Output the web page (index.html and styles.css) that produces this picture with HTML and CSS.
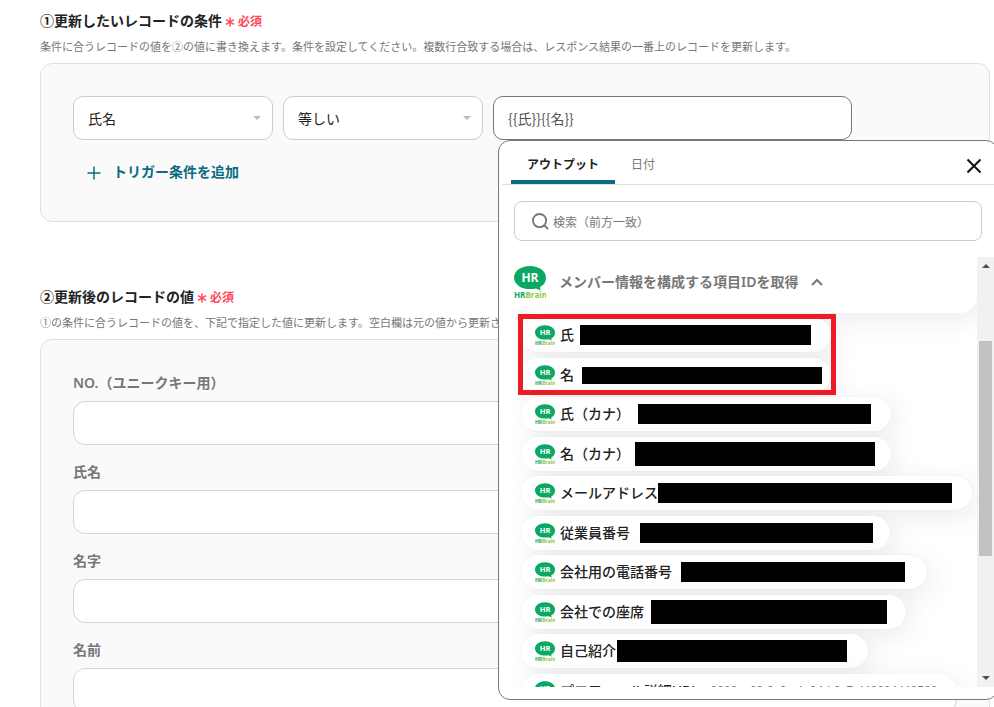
FILE: index.html
```html
<!DOCTYPE html>
<html lang="ja">
<head>
    <meta charset="UTF-8">
    <meta name="viewport" content="width=device-width, initial-scale=1.0">
    <title>レコードを更新する</title>
    <link rel="stylesheet" href="styles.css">
</head>
<body>

    <svg class="sprite" aria-hidden="true">
        <symbol id="hrbrain" viewBox="0 0 32 33">
            <path d="M16 0C25 0 32 5 32 11.500C32 16 30 19 26 21L26.500 24.500L22 22.500C20 23 18 23 16 23C12 23 8 22.500 5.500 20.500C2 18 0 15 0 11.500C0 5 7 0 16 0Z" fill="#0aa863"/>
            <text x="16" y="16" text-anchor="middle" class="logo-hr">HR</text>
            <text x="0" y="32" class="logo-name">HR<tspan class="logo-brain">Brain</tspan></text>
        </symbol>
    </svg>

    <main class="page">
        <section class="section">
            <h2 class="section-title">①更新したいレコードの条件<span class="required"><svg class="asterisk" viewBox="0 0 10 10"><path d="M5 0.500V9.500M1 2.700L9 7.300M9 2.700L1 7.300"/></svg>必須</span></h2>
            <p class="section-note">条件に合うレコードの値を②の値に書き換えます。条件を設定してください。複数行合致する場合は、レスポンス結果の一番上のレコードを更新します。</p>

            <div class="card card-condition">
                <div class="condition-row">
                    <div class="select-box">
                        <select aria-label="項目"><option>氏名</option></select>
                    </div>
                    <div class="select-box">
                        <select aria-label="条件"><option>等しい</option></select>
                    </div>
                    <div class="value-box">
                        <input class="text-input value-input" type="text" aria-label="値" value="{{氏}}{{名}}">

                        <!-- アウトプット選択メニュー -->
                        <div class="popup">
                            <div class="tab-bar">
                                <button class="tab-btn active" type="button">アウトプット</button>
                                <button class="tab-btn" type="button">日付</button>
                                <button class="close-btn" type="button" aria-label="閉じる">
                                    <svg viewBox="0 0 16 16"><path d="M1.500 1.500L14.500 14.500M14.500 1.500L1.500 14.500"/></svg>
                                </button>
                            </div>

                            <div class="search-box">
                                <svg viewBox="0 0 18 18"><circle cx="8" cy="8" r="7"/><path d="M13 13L17 17"/></svg>
                                <input type="text" aria-label="検索" placeholder="検索（前方一致）">
                            </div>

                            <div class="output-area">
                                <div class="output-scroll">
                                    <div class="group">
                                        <button class="group-header" type="button">
                                            <svg class="logo"><use href="#hrbrain"/></svg>
                                            <span>メンバー情報を構成する項目IDを取得</span>
                                            <svg class="chevron" viewBox="0 0 12 8"><path d="M1 7L6 2L11 7"/></svg>
                                        </button>
                                    </div>
                                    <ul class="output-list">
                                        <li><button class="output last-name" type="button"><svg class="logo"><use href="#hrbrain"/></svg>氏<span class="mask"></span></button></li>
                                        <li><button class="output first-name" type="button"><svg class="logo"><use href="#hrbrain"/></svg>名<span class="mask"></span></button></li>
                                        <li><button class="output last-kana" type="button"><svg class="logo"><use href="#hrbrain"/></svg>氏（カナ）<span class="mask"></span></button></li>
                                        <li><button class="output first-kana" type="button"><svg class="logo"><use href="#hrbrain"/></svg>名（カナ）<span class="mask"></span></button></li>
                                        <li><button class="output mail" type="button"><svg class="logo"><use href="#hrbrain"/></svg>メールアドレス<span class="mask"></span></button></li>
                                        <li><button class="output number" type="button"><svg class="logo"><use href="#hrbrain"/></svg>従業員番号<span class="mask"></span></button></li>
                                        <li><button class="output phone" type="button"><svg class="logo"><use href="#hrbrain"/></svg>会社用の電話番号<span class="mask"></span></button></li>
                                        <li><button class="output seat" type="button"><svg class="logo"><use href="#hrbrain"/></svg>会社での座席<span class="mask"></span></button></li>
                                        <li><button class="output intro" type="button"><svg class="logo"><use href="#hrbrain"/></svg>自己紹介<span class="mask"></span></button></li>
                                        <li><button class="output profile" type="button"><svg class="logo"><use href="#hrbrain"/></svg>プロフィール詳細URL<span class="output-id">9686ac69-2c0c-4a94-b8c7-448684448586</span></button></li>
                                    </ul>
                                    <div class="highlight"></div>
                                </div>
                                <div class="scrollbar">
                                    <span class="arrow arrow-up"></span>
                                    <span class="thumb"></span>
                                    <span class="arrow arrow-down"></span>
                                </div>
                            </div>
                        </div>
                    </div>
                </div>

                <button class="add-btn" type="button">
                    <svg viewBox="0 0 14 14"><path d="M7 0.500V13.500M0.500 7H13.500"/></svg>
                    トリガー条件を追加
                </button>
            </div>
        </section>

        <section class="section">
            <h2 class="section-title">②更新後のレコードの値<span class="required"><svg class="asterisk" viewBox="0 0 10 10"><path d="M5 0.500V9.500M1 2.700L9 7.300M9 2.700L1 7.300"/></svg>必須</span></h2>
            <p class="section-note">①の条件に合うレコードの値を、下記で指定した値に更新します。空白欄は元の値から更新されません。</p>

            <div class="card card-values">
                <div class="field">
                    <label for="field-no">NO.（ユニークキー用）</label>
                    <input class="text-input" id="field-no" type="text">
                </div>
                <div class="field">
                    <label for="field-fullname">氏名</label>
                    <input class="text-input" id="field-fullname" type="text">
                </div>
                <div class="field">
                    <label for="field-lastname">名字</label>
                    <input class="text-input" id="field-lastname" type="text">
                </div>
                <div class="field">
                    <label for="field-firstname">名前</label>
                    <input class="text-input" id="field-firstname" type="text">
                </div>
            </div>
        </section>
    </main>

</body>
</html>
```
FILE: styles.css
```css
:root {
    --primary-color: #0b6b82;
    --danger-color: #ff4757;
    --text-main: #222222;
    --text-sub: #777777;
    --border-light: #e0e0e3;
    --border-input: #cfd3da;
    --card-bg: #fafafa;
}

* {
    box-sizing: border-box;
}

body {
    margin: 0;
    height: 100vh;
    overflow: hidden;
    background-color: #fff;
    color: var(--text-main);
    font-family: "Noto Sans", "Noto Sans CJK JP", sans-serif;
    font-size: 14px;
}

button,
input,
select {
    font-family: inherit;
    color: inherit;
}

button {
    background: none;
    border: none;
    padding: 0;
    cursor: pointer;
}

svg {
    fill: none;
    flex-shrink: 0;
}

.sprite {
    position: absolute;
    width: 0;
    height: 0;
}

.page {
    padding: 11px 4px 0 40px;
}

.section {
    margin-bottom: 65px;
}

.section-title {
    display: flex;
    align-items: center;
    margin: 0;
    font-size: 14px;
    font-weight: 600;
    line-height: 20px;
}

.required {
    display: flex;
    align-items: center;
    gap: 3px;
    margin: 2px 0 0 3px;
    color: var(--danger-color);
    font-size: 12px;
    line-height: 16px;
}

.asterisk {
    width: 10px;
    height: 10px;
    stroke: currentColor;
    stroke-width: 1.5;
}

.section-note {
    margin: 8px 0;
    color: var(--text-sub);
    font-size: 11px;
    line-height: 16px;
}

.card {
    padding: 32px;
    background-color: var(--card-bg);
    border: 1px solid var(--border-light);
    border-radius: 12px;
}

.card-condition {
    height: 159px;
}

.condition-row {
    display: flex;
    gap: 10px;
}

.select-box {
    position: relative;
    width: 200px;
}

.select-box::after {
    content: "";
    position: absolute;
    top: 20px;
    right: 12px;
    border: 4px solid transparent;
    border-top-color: #bbb;
    border-bottom: none;
    pointer-events: none;
}

.select-box select {
    width: 100%;
    height: 44px;
    padding: 0 14px;
    appearance: none;
    background-color: #fff;
    border: 1px solid #ccc;
    border-radius: 10px;
    font-size: 14px;
}

.value-box {
    position: relative;
    width: 359px;
}

.text-input {
    display: block;
    width: 100%;
    height: 44px;
    padding: 0 14px;
    background-color: #fff;
    border: 1px solid var(--border-input);
    border-radius: 12px;
    font-size: 14px;
}

.value-input {
    border-color: var(--text-sub);
    border-radius: 10px;
    color: #555;
    font-family: "Noto Sans CJK JP", sans-serif;
}

.add-btn {
    display: flex;
    align-items: center;
    gap: 12px;
    margin: 22px 0 0 14px;
    color: var(--primary-color);
    font-size: 14px;
    font-weight: 600;
    line-height: 20px;
}

.add-btn svg {
    width: 14px;
    height: 14px;
    margin-top: 2px;
    stroke: currentColor;
    stroke-width: 1.5;
}

.field {
    margin-bottom: 15px;
}

.field label {
    display: block;
    margin-bottom: 8px;
    padding-top: 2px;
    color: var(--text-sub);
    font-weight: 600;
    line-height: 20px;
}

.card-values {
    padding-top: 31px;
}

/* メニュー */
.popup {
    position: absolute;
    top: 44px;
    left: 5px;
    z-index: 10;
    width: 500px;
    padding: 0 3px 12px;
    background-color: #fff;
    border: 1px solid var(--text-sub);
    border-radius: 12px;
}

.tab-bar {
    display: flex;
    height: 44px;
    padding: 0 12px 0 9px;
    border-bottom: 1px solid var(--border-light);
}

.tab-btn {
    padding: 6px 16px 4px;
    color: var(--text-sub);
    font-size: 12px;
}

.tab-btn.active {
    color: var(--text-main);
    font-weight: 600;
    background: linear-gradient(var(--primary-color), var(--primary-color)) bottom / 100% 4px no-repeat;
}

.close-btn {
    display: flex;
    align-items: center;
    margin-left: auto;
    padding-top: 6px;
}

.close-btn svg {
    width: 16px;
    height: 16px;
    stroke: #111;
    stroke-width: 2;
}

.search-box {
    display: flex;
    align-items: center;
    gap: 4px;
    height: 40px;
    margin: 16px 12px;
    padding: 0 17px;
    border: 1px solid #ccc;
    border-radius: 8px;
}

.search-box svg {
    width: 17px;
    height: 17px;
    stroke: var(--text-sub);
    stroke-width: 2;
}

.search-box input {
    flex: 1;
    padding: 2px 0 0;
    border: none;
    outline: none;
    font-size: 12px;
}

.search-box input::placeholder {
    color: var(--text-sub);
}

.output-area {
    display: flex;
    height: 430px;
}

.output-scroll {
    position: relative;
    flex: 1;
    overflow: hidden;
}

.group {
    height: 56px;
    margin-left: 19px;
    border-radius: 0 0 17px 17px;
    box-shadow: 6px 6px 28px rgba(0, 0, 0, 0.08);
}

.group-header {
    display: flex;
    align-items: center;
    gap: 13px;
    height: 50px;
    margin-left: -13px;
    padding: 0 6px;
    background-color: #fff;
    color: var(--text-sub);
    font-size: 14px;
    font-weight: 600;
    line-height: 20px;
}

.group-header .logo {
    width: 32px;
    height: 33px;
}

.chevron {
    width: 12px;
    height: 8px;
    stroke: var(--text-sub);
    stroke-width: 2;
}

.output-list {
    margin: 5px 0 0 19px;
    padding: 0;
    list-style: none;
}

.output-list li {
    display: flex;
    margin-bottom: 5px;
}

.output-list li:nth-child(odd) {
    margin-bottom: 6px;
}

.output {
    display: flex;
    align-items: center;
    height: 34px;
    padding: 0 20px 0 14px;
    background-color: #fff;
    border-radius: 17px;
    box-shadow: 6px 6px 28px rgba(0, 0, 0, 0.08), 0 0 2px rgba(0, 0, 0, 0.06);
    font-size: 14px;
    font-weight: 500;
    line-height: 20px;
    white-space: nowrap;
}

.output .logo {
    width: 20px;
    height: 21px;
    margin-right: 5px;
}

.logo-hr {
    fill: #fff;
    font: bold 12px "Open Sans", sans-serif;
}

.logo-name {
    fill: #0aa863;
    font: bold 8px "Open Sans", sans-serif;
}

.logo-brain {
    fill: #8cc63f;
}

/* 値を隠す黒塗り */
.mask {
    width: 233px;
    height: 20px;
    margin-left: auto;
    background-color: #000;
}

.last-name { width: 310px; }
.last-name .mask { width: 231px; }

.first-name { width: 310px; padding-right: 9px; }
.first-name .mask { width: 240px; height: 17px; }

.last-kana { width: 370px; }

.first-kana { width: 370px; padding-right: 16px; }
.first-kana .mask { width: 240px; height: 24px; }

.mail { width: 451px; }
.mail .mask { width: 294px; }

.number { width: 369px; padding-right: 17px; }

.phone { width: 406px; padding-right: 22px; }
.phone .mask { width: 224px; }

.seat { width: 385px; padding-right: 19px; }
.seat .mask { width: 236px; height: 24px; }

.intro { width: 347px; padding-right: 21px; }
.intro .mask { width: 230px; height: 22px; }

.profile { width: 436px; }

.output-id {
    margin-left: 12px;
    color: var(--text-sub);
    font-family: "Liberation Sans", sans-serif;
    font-size: 12px;
}

.highlight {
    position: absolute;
    top: 57px;
    left: 16px;
    width: 318px;
    height: 81px;
    border: 5px solid #ed1c24;
}

.scrollbar {
    display: flex;
    flex-direction: column;
    align-items: center;
    width: 17px;
    background-color: #f1f1f1;
}

.arrow {
    margin: 7px 0;
    border: 4px solid transparent;
}

.arrow-up {
    border-top: none;
    border-bottom-color: #505050;
}

.arrow-down {
    margin-top: auto;
    border-bottom: none;
    border-top-color: #505050;
}

.thumb {
    width: 13px;
    height: 215px;
    margin-top: 66px;
    background-color: #c1c1c1;
}
```
